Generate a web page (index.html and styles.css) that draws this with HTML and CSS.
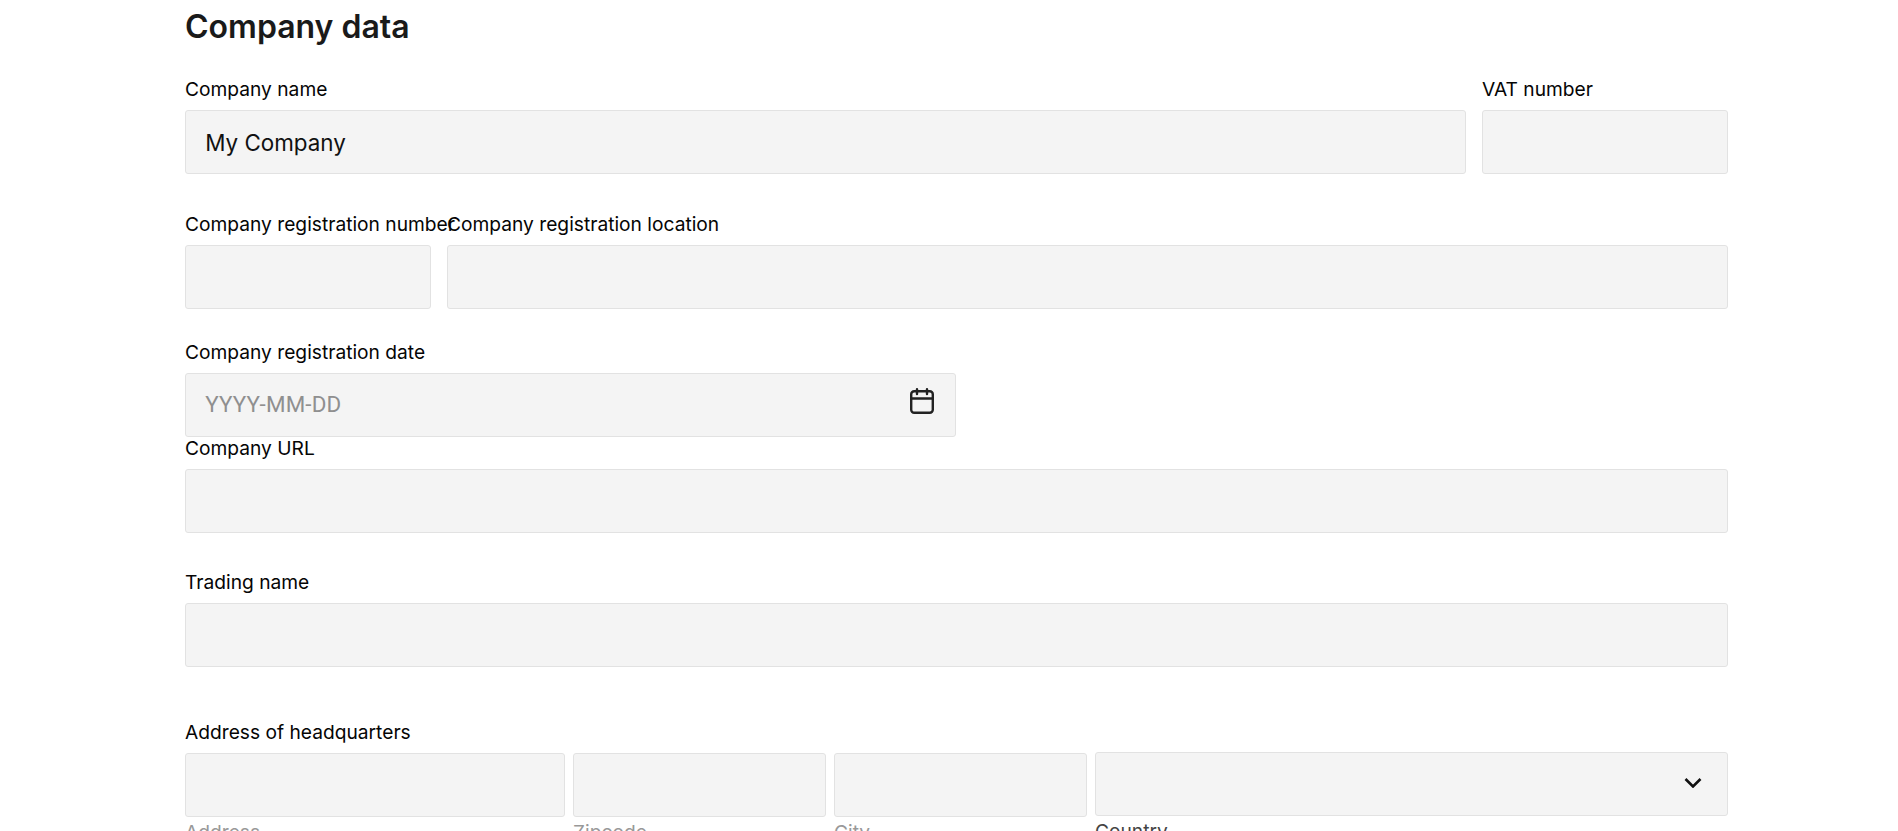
FILE: index.html
```html
<!DOCTYPE html>
<html lang="en">
<head>
<meta charset="utf-8">
<title>Company data</title>
<link rel="stylesheet" href="styles.css">
</head>
<body>
<main class="page">
  <h1 class="title">Company data</h1>
  <div class="row row-name">
    <div class="field"><label class="label">Company name</label><div class="input"><span class="value">My Company</span></div></div>
    <div class="field"><label class="label">VAT number</label><div class="input"></div></div>
  </div>
  <div class="row row-reg">
    <div class="field"><label class="label label-nowrap">Company registration number</label><div class="input"></div></div>
    <div class="field"><label class="label">Company registration location</label><div class="input"></div></div>
  </div>
  <div class="field field-date">
    <label class="label">Company registration date</label>
    <div class="input">
      <span class="placeholder">YYYY-MM-DD</span>
      <svg class="calendar" width="24" height="26" viewBox="0 0 24 26" fill="none" stroke="#222" stroke-width="2.400" stroke-linecap="round" stroke-linejoin="round" aria-hidden="true">
        <rect x="1.200" y="3.200" width="21.600" height="21.600" rx="3"/>
        <path d="M1.200 10.500H22.800M7 1.200V6M17 1.200V6"/>
      </svg>
    </div>
  </div>
  <div class="field field-url"><label class="label">Company URL</label><div class="input"></div></div>
  <div class="field field-trading"><label class="label">Trading name</label><div class="input"></div></div>
  <div class="field">
    <label class="label">Address of headquarters</label>
    <div class="address">
      <div><div class="input"></div><div class="caption">Address</div></div>
      <div><div class="input"></div><div class="caption">Zipcode</div></div>
      <div><div class="input"></div><div class="caption">City</div></div>
      <div class="country">
        <div class="input">
          <svg class="chevron" width="18" height="10" viewBox="0 0 18 10" fill="none" stroke="#111" stroke-width="2.600" aria-hidden="true"><path d="M1.500 1L9 8.500L16.500 1"/></svg>
        </div>
        <div class="caption caption-dark">Country</div>
      </div>
    </div>
  </div>
</main>
</body>
</html>
```
FILE: styles.css
```css
* { box-sizing: border-box; }
html, body { margin: 0; height: 831px; overflow: hidden; background: #fff; }
body { font-family: Inter, "Liberation Sans", sans-serif; color: #111; }
.page { padding: 0 170px 0 185px; }
.title { margin: 0; height: 77px; padding-top: 7px; font-size: 32px; line-height: 40px; font-weight: 600; color: #1a1a1a; }
.row { display: grid; column-gap: 16px; }
.row-name { grid-template-columns: 1fr 246px; margin-bottom: 38px; }
.row-reg { grid-template-columns: 246px 1fr; margin-bottom: 31px; }
.label { display: block; height: 24px; margin-bottom: 9px; font-size: 19.200px; line-height: 24px; color: #050505; }
.label-nowrap { white-space: nowrap; }
.input { position: relative; display: flex; align-items: center; height: 64px; padding: 0 19.200px; background: #f4f4f4; border: 1px solid #e2e2e2; border-radius: 3px; font-size: 22.400px; }
.value { position: relative; color: #111; }
.placeholder { position: relative; top: -1px; font-family: Roboto, sans-serif; letter-spacing: 0.15px; color: #8f8f8f; }
.field-date { width: 771px; margin-bottom: -1px; }
.field-url { margin-bottom: 37px; }
.field-trading { margin-bottom: 53px; }
.calendar { position: absolute; top: 14px; right: 21px; }
.chevron { position: absolute; top: 25px; right: 25px; }
.address { display: grid; grid-template-columns: 380px 253px 253px 1fr; column-gap: 8px; }
.country { margin-top: -1px; }
.caption { margin-top: 3px; font-size: 19.200px; line-height: 24px; color: #999; }
.caption-dark { color: #444; }
```
